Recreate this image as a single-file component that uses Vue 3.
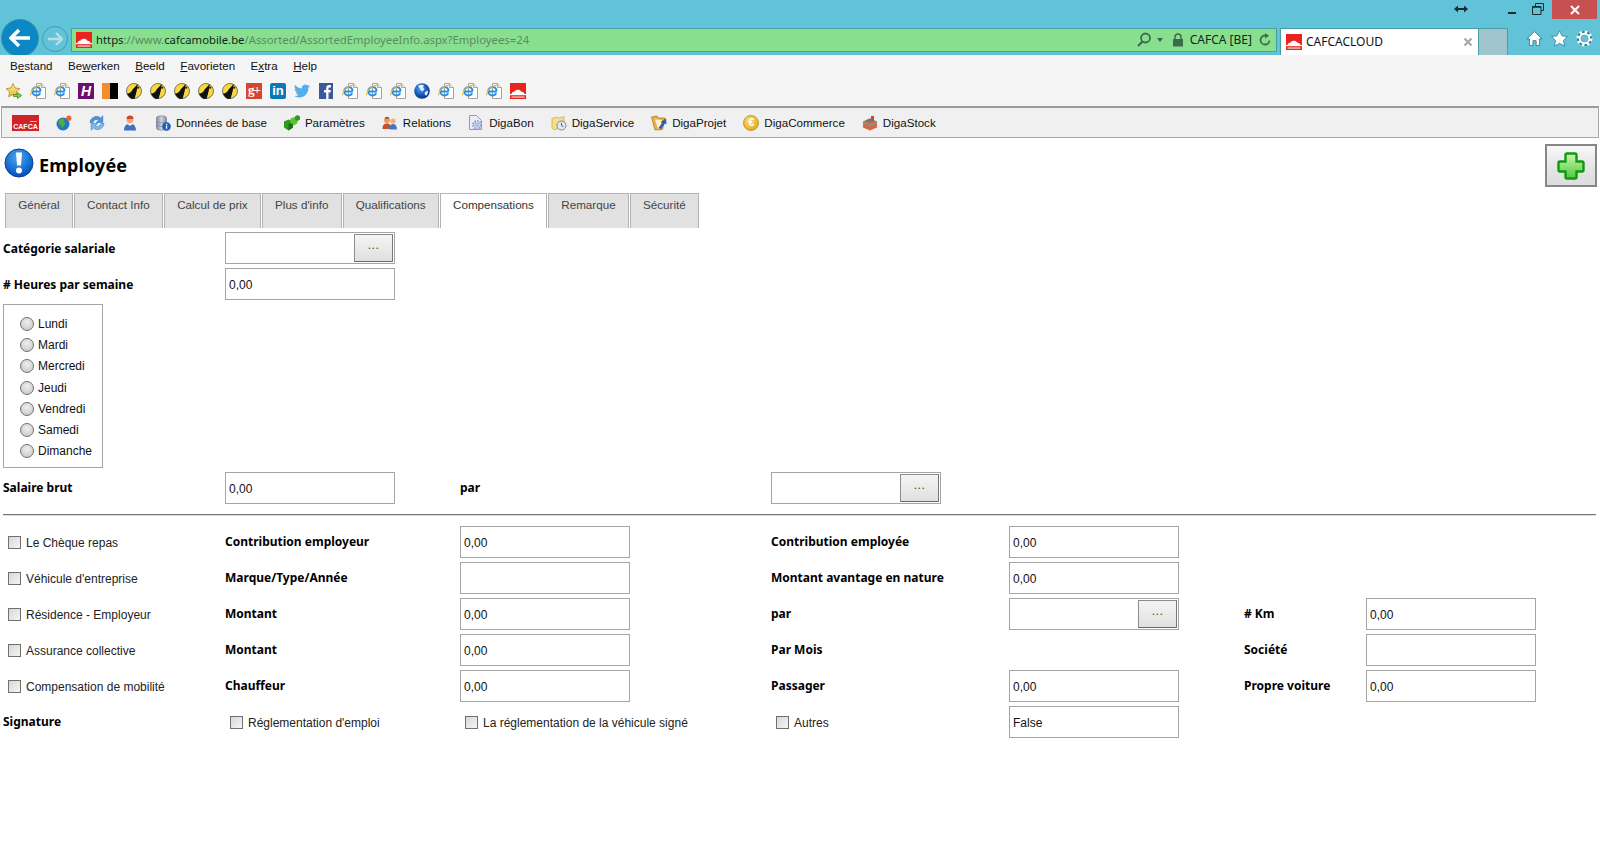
<template>
  <div class="app">
    <svg class="defs" width="0" height="0" aria-hidden="true">
      <defs>
        <linearGradient id="gStar" x1="0" y1="0" x2="0" y2="1"><stop offset="0" stop-color="#fff3a0" /><stop offset="1" stop-color="#e9b52c" /></linearGradient>
        <radialGradient id="gGlobe" cx="0.4" cy="0.35" r="0.7"><stop offset="0" stop-color="#4fa6f0" /><stop offset="0.6" stop-color="#1553b8" /><stop offset="1" stop-color="#0a2a78" /></radialGradient>
        <radialGradient id="gInfo" cx="0.45" cy="0.3" r="0.8"><stop offset="0" stop-color="#4aa8f5" /><stop offset="0.7" stop-color="#0b63c8" /><stop offset="1" stop-color="#0a3f96" /></radialGradient>
        <linearGradient id="gPlus" x1="0" y1="0" x2="0" y2="1"><stop offset="0" stop-color="#cdf5b0" /><stop offset="1" stop-color="#4fc93c" /></linearGradient>
        <linearGradient id="gDb" x1="0" y1="0" x2="1" y2="0"><stop offset="0" stop-color="#7f8ba8" /><stop offset="0.5" stop-color="#cdd3e0" /><stop offset="1" stop-color="#7f8ba8" /></linearGradient>
      </defs>
      <symbol id="i-star" viewBox="0 0 16 16">
        <path d="M7 .6l2.100 4.400 4.800.600-3.500 3.300.900 4.800L7 11.400l-4.300 2.300.900-4.800L.100 5.600 4.900 5z" fill="url(#gStar)" stroke="#a8862a" stroke-width=".8" />
        <path d="M7.500 11.500h4V9.500l4.200 3-4.200 3v-2h-4z" fill="#78d640" stroke="#2f8a1e" stroke-width=".7" />
      </symbol>
      <symbol id="i-ie" viewBox="0 0 16 16">
        <path d="M6.500.5h5l4 4v11h-9z" fill="#fff" stroke="#a4a4a4" />
        <path d="M11.500.5v4h4" fill="#eee" stroke="#a4a4a4" />
        <path d="M2.500 8.500h8.300M10.500 8c0-2.500-1.900-4-4-4S2.300 5.900 2.300 8.300s1.900 4.200 4.200 4.200c1.700 0 3-.8 3.800-2.200" fill="none" stroke="#2490e8" stroke-width="2" />
        <path d="M.6 12.500C.4 7 6.500 1.800 12.500 2.200" fill="none" stroke="#f4b72c" stroke-width="1.100" />
      </symbol>
      <symbol id="i-flag" viewBox="0 0 16 16">
        <rect width="8" height="16" fill="#f28d2a" /><rect x="8" width="8" height="16" fill="#000" />
      </symbol>
      <symbol id="i-taxi" viewBox="0 0 16 16">
        <circle cx="8" cy="8" r="7.500" fill="#f8d83f" stroke="#2a2a20" stroke-width=".6" />
        <path d="M1 10.500c2.800 0 4.800-1.800 6-4.500L11.800 1c-.3 4.500-1.600 9.500-3.200 14.700l-3 .2C3.500 15 1.800 13 1 10.500z" fill="#111" />
        <circle cx="12.300" cy="4.800" r="1" fill="#111" />
      </symbol>
      <symbol id="i-twitter" viewBox="0 0 24 24">
        <path d="M23.953 4.570a10 10 0 01-2.825.775 4.958 4.958 0 002.163-2.723c-.951.555-2.005.959-3.127 1.184a4.920 4.920 0 00-8.384 4.482C7.690 8.095 4.067 6.130 1.640 3.162a4.822 4.822 0 00-.666 2.475c0 1.710.870 3.213 2.188 4.096a4.904 4.904 0 01-2.228-.616v.060a4.923 4.923 0 003.946 4.827 4.996 4.996 0 01-2.212.085 4.936 4.936 0 004.604 3.417 9.867 9.867 0 01-6.102 2.105c-.390 0-.779-.023-1.170-.067a13.995 13.995 0 007.557 2.209c9.053 0 13.998-7.496 13.998-13.985 0-.210 0-.420-.015-.630A9.935 9.935 0 0024 4.590z" fill="#55acee" />
      </symbol>
      <symbol id="i-fb" viewBox="0 0 16 16">
        <rect x="1" width="14" height="16" fill="#3b5998" />
        <path d="M10.500 16V9.500h2l.3-2.500h-2.300V5.600c0-.7.2-1.200 1.200-1.200H13V2.200c-.3 0-1-.1-1.800-.1-1.800 0-3 1.100-3 3.100V7H6v2.500h2.200V16z" fill="#fff" />
      </symbol>
      <symbol id="i-globe" viewBox="0 0 16 16">
        <circle cx="8" cy="8" r="7.800" fill="url(#gGlobe)" />
        <path d="M4 3c2-1.400 4.500-1.400 6-.6L9 4.500 10.500 6 8.500 8.500 7 7.500 5.500 5zM11 9l3-1.500c.3 2-.5 4-2 5.200L10.500 11z" fill="#dceeff" />
      </symbol>
      <symbol id="i-cafca" viewBox="0 0 16 16">
        <rect width="16" height="16" fill="#ea231c" />
        <path d="M1.500 11c.2-1.700 1.700-2.300 3-2.200C5.400 6.400 10 6 11.200 8.800c1.500-.1 3 .6 3.200 2.200z" fill="#fff" />
        <rect y="11" width="16" height="1.200" fill="#fff" />
        <path d="M1.500 13.200h13v1.800h-13z" fill="#fff" opacity=".55" />
      </symbol>
      <symbol id="i-tglobe" viewBox="0 0 16 16">
        <circle cx="7" cy="9" r="6.500" fill="#1f78c8" />
        <path d="M3 5c2-1.500 4-1.800 5.500-1L8 6.500 9.500 8l-2 3.500-1.500 2-1-3-2.500-2z" fill="#4fae3a" />
        <circle cx="12.800" cy="3.200" r="2.600" fill="#e8662e" />
      </symbol>
      <symbol id="i-sync" viewBox="0 0 16 16">
        <path d="M1 7.500C1.500 3.500 5 1 8.500 1.500c1.200.1 2.300.7 3.200 1.400L13.800.8v6.700H7.200l2.400-2.400c-2.100-1.300-4.700-.5-5.500 2.400z" fill="#4a95e0" stroke="#2a6ab0" stroke-width=".5" />
        <path d="M15 8.500c-.5 4-4 6.500-7.500 6-1.200-.1-2.300-.7-3.200-1.400l-2.100 2.100V8.500h6.600l-2.400 2.400c2.100 1.300 4.700.5 5.500-2.400z" fill="#7db8ef" stroke="#2a6ab0" stroke-width=".5" />
      </symbol>
      <symbol id="i-user" viewBox="0 0 16 16">
        <circle cx="8" cy="5" r="3.300" fill="#f0a878" />
        <path d="M4.500 4C4.500 1.500 6 .5 8 .5s3.500 1 3.500 3.500z" fill="#d8402a" />
        <path d="M2 15.500c0-4 2-6 3.500-6.300L8 11l2.500-1.800c1.500.3 3.500 2.300 3.500 6.300z" fill="#3f6fc4" />
      </symbol>
      <symbol id="i-db" viewBox="0 0 16 16">
        <path d="M1.500 3c0-3 10-3 10 0v10c0 3-10 3-10 0z" fill="url(#gDb)" stroke="#667" stroke-width=".5" />
        <path d="M1.500 6.500c1 1.700 9 1.700 10 0M1.500 10c1 1.700 9 1.700 10 0" fill="none" stroke="#667" stroke-width=".5" />
        <circle cx="11.500" cy="11.500" r="4.300" fill="#1260c0" />
        <rect x="10.900" y="10.500" width="1.300" height="3.300" fill="#fff" /><rect x="10.900" y="8.800" width="1.300" height="1.200" fill="#fff" />
      </symbol>
      <symbol id="i-params" viewBox="0 0 16 16">
        <path d="M0 6.500l4.500-2 4.500 2v6l-4.500 3-4.500-3z" fill="#2e9a1e" />
        <path d="M4.500 9L9 6.500v6l-4.500 3z" fill="#1d6f12" />
        <path d="M6.500 3.500l3.500-1.500 3.500 1.500v4.500L10 10.500 6.500 8z" fill="#5cc23a" />
        <path d="M11 1.500l2.500-1.500L16 1.500v3l-2.500 1.500-2.500-1.500z" fill="#2e9a1e" />
      </symbol>
      <symbol id="i-relations" viewBox="0 0 16 16">
        <circle cx="5" cy="5" r="3" fill="#e89a5a" />
        <path d="M3 3.500C3 1.500 7 1.500 7 3.500z" fill="#8a3a1a" />
        <path d="M.5 14c0-4 1.500-5.500 4.500-5.500s4 1.500 4 5.500z" fill="#c8502a" />
        <circle cx="11" cy="6" r="2.600" fill="#f0b070" />
        <path d="M7.500 14.500c0-3.500 1-5.500 3.500-5.500s4 2 4 5.500z" fill="#3f78c8" />
      </symbol>
      <symbol id="i-bon" viewBox="0 0 16 16">
        <path d="M1.500.5h7l5 5v9h-12z" fill="#e8eefa" stroke="#8c9cc0" />
        <circle cx="9" cy="10" r="3.800" fill="none" stroke="#8f9bd0" stroke-width="2.400" stroke-dasharray="1.500 1" />
        <circle cx="9" cy="10" r="2.400" fill="#b7c0e4" />
      </symbol>
      <symbol id="i-service" viewBox="0 0 16 16">
        <path d="M1 3.500L6 2l1 1 6-1.500v10L3 15 1 13z" fill="#f6de88" stroke="#c8a840" stroke-width=".7" />
        <circle cx="10.500" cy="10.500" r="4.500" fill="#dfeaf2" stroke="#6b8ca6" />
        <path d="M10.500 7.800v2.900l2 .8" fill="none" stroke="#3a6a90" />
      </symbol>
      <symbol id="i-projet" viewBox="0 0 16 16">
        <path d="M.5 2L6 1l1.500 2L14 3 11.500 14.500 4 15z" fill="#f0b048" stroke="#a86c14" stroke-width=".7" />
        <path d="M4 4.500l3 9 3-.4L11 5z" fill="#fff4d4" />
        <path d="M7.500 13l3.500-5-1.500-1L15 3.500l.5 6-1.500-1-4 5.500z" fill="#2f5fa8" />
      </symbol>
      <symbol id="i-stock" viewBox="0 0 16 16">
        <path d="M1 6.500l7-3 7 3v6l-7 3-7-3z" fill="#d8683e" />
        <path d="M1 6.500l7 3 7-3v2l-7 3-7-3z" fill="#8f8f8f" />
        <path d="M9 1h3v4l-3 1z" fill="#c04a28" />
        <path d="M3 5.500l5-2 5 2-5 2z" fill="#777" />
      </symbol>
      <symbol id="i-plus" viewBox="0 0 30 30">
        <path d="M11 2.500h8a1.500 1.500 0 011.500 1.500v6.500H26a1.500 1.500 0 011.500 1.500v7a1.500 1.500 0 01-1.500 1.500h-5.500V26a1.500 1.500 0 01-1.500 1.500h-8A1.500 1.500 0 019.500 26v-5.500H4A1.500 1.500 0 012.500 19v-7A1.500 1.500 0 014 10.500h5.500V4A1.500 1.500 0 0111 2.500z" fill="url(#gPlus)" stroke="#0f9a12" stroke-width="2.400" />
      </symbol>
    </svg>

    <header class="chrome">
      <div class="caption">
        <svg class="cap-resize" width="16" height="16" viewBox="0 0 16 16"><path d="M1 8l4-3.500v2.500h6V4.500L15 8l-4 3.500V9H5v2.500z" fill="#1c2a30" /></svg>
        <span class="cap-min"></span>
        <svg class="cap-restore" width="12" height="12" viewBox="0 0 12 12"><path d="M3.500 3V.5h8v7H9M.5 3.500h8.500v8H.5z" fill="none" stroke="#1c2a30" /><path d="M.5 4h8.500" stroke="#1c2a30" stroke-width="1.500" /></svg>
        <span class="cap-close">
          <svg width="12" height="12" viewBox="0 0 12 12"><path d="M2 2l8 8M10 2l-8 8" stroke="#fff" stroke-width="2" /></svg>
        </span>
      </div>
      <div class="navrow">
        <span class="back">
          <svg width="22" height="22" viewBox="0 0 22 22"><path d="M10 3l-8 8 8 8M3 11h18" fill="none" stroke="#fff" stroke-width="3.600" /></svg>
        </span>
        <span class="forward">
          <svg width="16" height="16" viewBox="0 0 16 16"><path d="M9 2l6 6-6 6M14 8H1" fill="none" stroke="#b7e0e4" stroke-width="2.400" /></svg>
        </span>
        <div class="address">
          <svg class="ic"><use href="#i-cafca" /></svg>
          <span class="url"><b>https</b>://www.<b>cafcamobile.be</b>/Assorted/AssortedEmployeeInfo.aspx?Employees=24</span>
          <svg class="search" width="16" height="16" viewBox="0 0 16 16"><circle cx="9.500" cy="6" r="4.500" fill="none" stroke="#3c6b4c" stroke-width="1.800" /><path d="M6.500 9.500L2 14" stroke="#3c6b4c" stroke-width="2.200" /></svg>
          <span class="caret"></span>
          <svg class="lock" width="12" height="14" viewBox="0 0 12 14"><path d="M3 6V4a3 3 0 016 0v2" fill="none" stroke="#3c6b4c" stroke-width="1.500" /><rect x="1" y="6" width="10" height="7.500" fill="#3c6b4c" /></svg>
          <span class="cert">CAFCA [BE]</span>
          <svg class="reload" width="14" height="14" viewBox="0 0 14 14"><path d="M11.500 7.500A4.500 4.500 0 117 2.500" fill="none" stroke="#3c6b4c" stroke-width="1.800" /><path d="M7 0l4 2.800L7 5.500z" fill="#3c6b4c" /></svg>
        </div>
        <div class="tab-page">
          <svg class="ic"><use href="#i-cafca" /></svg>
          <span class="tab-title">CAFCACLOUD</span>
          <svg class="tab-x" width="10" height="10" viewBox="0 0 10 10"><path d="M1.500 1.500l7 7M8.500 1.500l-7 7" stroke="#a8a8a8" stroke-width="2.200" /></svg>
        </div>
        <span class="tab-new"></span>
        <div class="tools">
          <svg width="17" height="17" viewBox="0 0 16 16"><path d="M8 1.500L.8 8.300h2.400v6.200h3.300V10h3v4.500h3.300V8.300h2.400z" fill="#fff" stroke="#2f7a8c" stroke-width=".8" /></svg>
          <svg width="17" height="17" viewBox="0 0 16 16"><path d="M8 .6l2.300 4.900 5.200.7-3.800 3.600 1 5.300L8 12.500l-4.700 2.600 1-5.300L.5 6.200l5.200-.7z" fill="#fff" stroke="#2f7a8c" stroke-width=".7" /></svg>
          <svg width="17" height="17" viewBox="0 0 16 16"><circle cx="8" cy="8" r="5.200" fill="none" stroke="#2f7a8c" stroke-width="3.800" /><circle cx="8" cy="8" r="6.200" fill="none" stroke="#fff" stroke-width="2.600" stroke-dasharray="2.400 2.470" /><circle cx="8" cy="8" r="4.500" fill="none" stroke="#fff" stroke-width="1.800" /></svg>
        </div>
      </div>
    </header>

    <nav class="menubar">
      <span>B<u>e</u>stand</span>
      <span>Be<u>w</u>erken</span>
      <span><u>B</u>eeld</span>
      <span><u>F</u>avorieten</span>
      <span>E<u>x</u>tra</span>
      <span><u>H</u>elp</span>
    </nav>
    <div class="favbar">
      <template v-for="(fav, index) in favorites" :key="index">
        <span v-if="fav.text" class="badge" :class="fav.cls">{{ fav.text }}</span>
        <svg v-else class="ic"><use :href="'#i-' + fav.icon" /></svg>
      </template>
    </div>

    <div class="toolbar">
      <div class="cafca-logo">
        <i></i>
        <span>CAFCA</span>
      </div>
      <svg class="ic"><use href="#i-tglobe" /></svg>
      <svg class="ic"><use href="#i-sync" /></svg>
      <svg class="ic"><use href="#i-user" /></svg>
      <span v-for="item in toolItems" :key="item.label" class="tool-item">
        <span v-if="item.icon === 'coin'" class="coin">€</span>
        <svg v-else class="ic"><use :href="'#i-' + item.icon" /></svg>
        {{ item.label }}
      </span>
    </div>

    <main class="page">
      <div class="title-row">
        <h1>
          <svg width="30" height="30" viewBox="0 0 30 30">
            <circle cx="15" cy="15" r="14" fill="url(#gInfo)" stroke="#0a3f96" />
            <path d="M12 4.500h6l-1 13h-4z" fill="#fff" />
            <circle cx="15" cy="22.500" r="3" fill="#fff" />
          </svg>
          <span>Employée</span>
        </h1>
        <button class="add-btn"><svg width="30" height="30"><use href="#i-plus" /></svg></button>
      </div>

      <div class="tabs">
        <span
          v-for="tab in tabs"
          :key="tab"
          class="tab"
          :class="{ active: tab === activeTab }"
        >{{ tab }}</span>
      </div>

      <form class="form" @submit.prevent>
        <label class="lbl top">Catégorie salariale</label>
        <div class="lookup c2"><input type="text" /><button type="button">...</button></div>

        <label class="lbl top"># Heures par semaine</label>
        <input class="field c2" type="text" value="0,00" />

        <div class="days">
          <label v-for="day in days" :key="day" class="day">
            <input type="radio" name="day" />{{ day }}
          </label>
        </div>

        <label class="lbl">Salaire brut</label>
        <input class="field c2" type="text" value="0,00" />
        <label class="lbl c3">par</label>
        <div class="lookup c4"><input type="text" /><button type="button">...</button></div>

        <hr />

        <label class="chk first"><input type="checkbox" />Le Chèque repas</label>
        <label class="lbl c2">Contribution employeur</label>
        <input class="field c3" type="text" value="0,00" />
        <label class="lbl c4">Contribution employée</label>
        <input class="field c5" type="text" value="0,00" />

        <label class="chk first"><input type="checkbox" />Véhicule d'entreprise</label>
        <label class="lbl c2">Marque/Type/Année</label>
        <input class="field c3" type="text" />
        <label class="lbl c4">Montant avantage en nature</label>
        <input class="field c5" type="text" value="0,00" />

        <label class="chk first"><input type="checkbox" />Résidence - Employeur</label>
        <label class="lbl c2">Montant</label>
        <input class="field c3" type="text" value="0,00" />
        <label class="lbl c4">par</label>
        <div class="lookup c5"><input type="text" /><button type="button">...</button></div>
        <label class="lbl c6"># Km</label>
        <input class="field c7" type="text" value="0,00" />

        <label class="chk first"><input type="checkbox" />Assurance collective</label>
        <label class="lbl c2">Montant</label>
        <input class="field c3" type="text" value="0,00" />
        <label class="lbl c4">Par Mois</label>
        <label class="lbl c6">Société</label>
        <input class="field c7" type="text" />

        <label class="chk first"><input type="checkbox" />Compensation de mobilité</label>
        <label class="lbl c2">Chauffeur</label>
        <input class="field c3" type="text" value="0,00" />
        <label class="lbl c4">Passager</label>
        <input class="field c5" type="text" value="0,00" />
        <label class="lbl c6">Propre voiture</label>
        <input class="field c7" type="text" value="0,00" />

        <label class="lbl">Signature</label>
        <label class="chk c2"><input type="checkbox" />Réglementation d'emploi</label>
        <label class="chk c3"><input type="checkbox" />La réglementation de la véhicule signé</label>
        <label class="chk c4"><input type="checkbox" />Autres</label>
        <input class="field c5" type="text" value="False" />
      </form>
    </main>
  </div>
</template>

<script setup>
const ie = { icon: "ie" };
const taxi = { icon: "taxi" };

const favorites = [
  { icon: "star" },
  ie,
  ie,
  { text: "H", cls: "b-h" },
  { icon: "flag" },
  taxi,
  taxi,
  taxi,
  taxi,
  taxi,
  { text: "g+", cls: "b-g" },
  { text: "in", cls: "b-in" },
  { icon: "twitter" },
  { icon: "fb" },
  ie,
  ie,
  ie,
  { icon: "globe" },
  ie,
  ie,
  ie,
  { icon: "cafca" },
];

const toolItems = [
  { icon: "db", label: "Données de base" },
  { icon: "params", label: "Paramètres" },
  { icon: "relations", label: "Relations" },
  { icon: "bon", label: "DigaBon" },
  { icon: "service", label: "DigaService" },
  { icon: "projet", label: "DigaProjet" },
  { icon: "coin", label: "DigaCommerce" },
  { icon: "stock", label: "DigaStock" },
];

const tabs = [
  "Général",
  "Contact Info",
  "Calcul de prix",
  "Plus d'info",
  "Qualifications",
  "Compensations",
  "Remarque",
  "Sécurité",
];
const activeTab = "Compensations";

const days = ["Lundi", "Mardi", "Mercredi", "Jeudi", "Vendredi", "Samedi", "Dimanche"];
</script>

<style scoped>
.app {
  font-family: "Liberation Sans", "DejaVu Sans", sans-serif;
  font-size: 12px;
  color: #111;
  background: #fff;
  min-height: 860px;
}
.defs {
  position: absolute;
}
.ic {
  width: 16px;
  height: 16px;
  flex: none;
}
.chrome {
  height: 55px;
  background: #60c3d8;
  overflow: hidden;
  font-family: "Noto Sans", sans-serif;
}
.caption {
  height: 27px;
  display: flex;
  align-items: flex-start;
}
.cap-resize {
  margin: 1px 0 0 1453px;
}
.cap-min {
  width: 8px;
  height: 2px;
  background: #1c2a30;
  margin: 12px 0 0 39px;
}
.cap-restore {
  margin: 3px 0 0 16px;
}
.cap-close {
  width: 45px;
  height: 19px;
  margin-left: 8px;
  background: #c75050;
  display: flex;
  align-items: center;
  justify-content: center;
}
.navrow {
  height: 28px;
  display: flex;
  align-items: flex-start;
  padding-left: 2px;
}
.back {
  width: 36px;
  height: 36px;
  flex: none;
  margin-top: -7px;
  border-radius: 50%;
  background: #0b87c4;
  box-shadow: 0 0 0 1px #3a92a8;
  display: flex;
  align-items: center;
  justify-content: center;
}
.forward {
  width: 26px;
  height: 26px;
  flex: none;
  margin: -1px 0 0 4px;
  border-radius: 50%;
  border: 1px solid #3f9db2;
  box-sizing: border-box;
  display: flex;
  align-items: center;
  justify-content: center;
}
.address {
  width: 1206px;
  height: 24px;
  flex: none;
  margin: 1px 0 0 3px;
  box-sizing: border-box;
  border: 1px solid #47a0a8;
  background: #88e08e;
  display: flex;
  align-items: center;
  padding-left: 4px;
}
.url {
  margin-left: 4px;
  padding-bottom: 2px;
  color: #5a8a66;
  flex: 1;
  font-size: 11.300px;
}
.url b {
  font-weight: 400;
  color: #10261a;
}
.search {
  flex: none;
}
.caret {
  width: 0;
  height: 0;
  border: 3.500px solid transparent;
  border-top: 4px solid #3c6b4c;
  border-bottom: 0;
  margin: 0 9px 0 5px;
}
.lock {
  flex: none;
}
.cert {
  margin: 0 0 0 6px;
  padding-bottom: 1px;
  color: #10261a;
}
.reload {
  margin: 0 4px 0 6px;
  flex: none;
}
.tab-page {
  width: 199px;
  height: 27px;
  flex: none;
  margin: 1px 0 0 3px;
  background: #fff;
  box-sizing: border-box;
  border: 1px solid #47a0a8;
  border-bottom: 0;
  display: flex;
  align-items: center;
  padding: 0 5px 0 5px;
}
.tab-title {
  margin-left: 4px;
  padding-bottom: 2px;
  flex: 1;
}
.tab-new {
  width: 29px;
  height: 27px;
  flex: none;
  margin-top: 1px;
  background: #9fc4cd;
  box-sizing: border-box;
  border-right: 1px solid #47a0a8;
  border-top: 1px solid #47a0a8;
}
.tools {
  display: flex;
  gap: 8px;
  margin: 3px 0 0 18px;
}
.menubar {
  height: 23px;
  background: #f5f5f5;
  display: flex;
  align-items: center;
  gap: 15.500px;
  padding: 0 0 2px 10px;
  box-sizing: border-box;
  font-size: 11.600px;
}
.favbar {
  height: 28px;
  background: #f5f5f5;
  display: flex;
  align-items: center;
  gap: 8px;
  padding: 0 0 3px 6px;
  box-sizing: border-box;
}
.badge {
  width: 16px;
  height: 16px;
  flex: none;
  overflow: hidden;
  text-align: center;
  color: #fff;
  font-weight: 700;
}
.b-h {
  background: #6b0f6e;
  font: italic 700 14px/16px "Liberation Sans", sans-serif;
}
.b-g {
  background: #d8452e;
  font: 700 13px/14px "Liberation Serif", serif;
  letter-spacing: -1px;
}
.b-in {
  background: #0b79b7;
  border-radius: 2px;
  font: 700 13px/16px "Liberation Sans", sans-serif;
}
.toolbar {
  height: 32px;
  margin: 0 1px;
  box-sizing: border-box;
  background: #f0f0f0;
  border: 1px solid #a8a8a8;
  border-top: 2px solid #9a9a9a;
  display: flex;
  align-items: center;
  padding-left: 10px;
  gap: 17px;
  font-size: 11.600px;
}
.cafca-logo {
  width: 27px;
  height: 16px;
  flex: none;
  background: #cf2328;
  color: #fff;
  font: 700 7px/7px "Liberation Sans", sans-serif;
  display: flex;
  flex-direction: column;
  justify-content: flex-end;
  align-items: center;
}
.cafca-logo i {
  width: 7px;
  height: 1px;
  background: #f0b0b0;
  align-self: flex-end;
  margin: 0 2px 1px 0;
}
.cafca-logo span {
  margin-bottom: 1px;
}
.tool-item {
  display: flex;
  align-items: center;
  gap: 5px;
}
.coin {
  width: 16px;
  height: 16px;
  flex: none;
  box-sizing: border-box;
  border-radius: 50%;
  background: radial-gradient(circle at 40% 35%, #ffe27a, #d89a12);
  border: 1px solid #c9962a;
  color: #fff;
  font: 700 10px/14px "Liberation Sans", sans-serif;
  text-align: center;
}
.title-row {
  height: 55px;
  box-sizing: border-box;
  display: flex;
  justify-content: space-between;
  align-items: flex-start;
  padding: 6px 3px 0 4px;
}
h1 {
  margin: 4px 0 0;
  font: 700 18px "Noto Sans", sans-serif;
  color: #000;
  display: flex;
  align-items: center;
  gap: 5px;
}
h1 span {
  padding-top: 4px;
  letter-spacing: .15px;
}
.add-btn {
  width: 52px;
  height: 43px;
  box-sizing: border-box;
  border: 2px solid #868686;
  background: linear-gradient(#f8f8f8, #e6e6e6 50%, #dcdcdc);
  padding: 0;
  display: flex;
  align-items: center;
  justify-content: center;
}
.tabs {
  height: 35px;
  display: flex;
  gap: 1px;
  padding-left: 5px;
}
.tab {
  box-sizing: border-box;
  background: #e1e1e1;
  border: 1px solid #b4b4b4;
  border-bottom: 0;
  color: #444;
  padding: 4px 12.200px 0;
  font-size: 11.650px;
}
.tab.active {
  background: #fff;
  color: #333;
}
.form {
  display: grid;
  grid-template-columns: 222px 235px 311px 238px 235px 122px 170px;
  grid-template-rows: 32px 32px 164px 32px 14px repeat(6, 32px);
  row-gap: 4px;
  padding: 4px 0 0 3px;
}
.lbl {
  font: 700 12px "Noto Sans", sans-serif;
  color: #000;
  align-self: center;
  grid-column: 1;
  margin-bottom: 2px;
}
.lbl.top {
  margin-bottom: 0;
}
.c2 { grid-column: 2; }
.c3 { grid-column: 3; }
.c4 { grid-column: 4; }
.c5 { grid-column: 5; }
.c6 { grid-column: 6; }
.c7 { grid-column: 7; }
.field,
.lookup {
  width: 170px;
  height: 32px;
  box-sizing: border-box;
  border: 1px solid #a6a6a6;
  background: #fff;
}
.field {
  font: inherit;
  color: #111;
  padding: 2px 3px 0;
  outline: none;
  border-radius: 0;
}
.lookup {
  display: flex;
  align-items: center;
  padding: 0 1px;
}
.lookup input {
  flex: 1;
  min-width: 0;
  border: 0;
  outline: none;
}
.lookup button {
  width: 39px;
  height: 28px;
  flex: none;
  box-sizing: border-box;
  padding: 0 0 6px;
  border: 1px solid #8c8c8c;
  border-right-color: #777;
  border-bottom-color: #666;
  background: linear-gradient(#f4f4f4, #e0e0e0);
  font: 12px "Liberation Sans", sans-serif;
  letter-spacing: .5px;
  color: #444;
}
.days {
  grid-column: 1;
  width: 100px;
  box-sizing: border-box;
  border: 1px solid #a6a6a6;
  padding: 8px 0 0 16px;
}
.day {
  height: 21.300px;
  display: flex;
  align-items: center;
  gap: 4px;
}
input[type="radio"],
input[type="checkbox"] {
  appearance: none;
  width: 13px;
  height: 13px;
  flex: none;
  margin: 0;
  border: 1px solid #707070;
  background: linear-gradient(135deg, #d8d8d8, #f4f4f4);
}
input[type="radio"] {
  width: 14px;
  height: 14px;
  border-radius: 50%;
  background: radial-gradient(circle at 50% 35%, #eeeeee, #c4c4c4);
}
.chk {
  display: flex;
  align-items: center;
  gap: 5px;
  padding: 2px 0 0 5px;
  color: #222;
}
.chk input {
  margin-bottom: 2px;
}
.chk.first {
  grid-column: 1;
}
hr {
  grid-column: 1 / -1;
  align-self: start;
  margin: 6px 0 0;
  width: 1593px;
  height: 1px;
  border: 0;
  background: #777;
  box-shadow: 0 1px 0 #ddd;
}
</style>
